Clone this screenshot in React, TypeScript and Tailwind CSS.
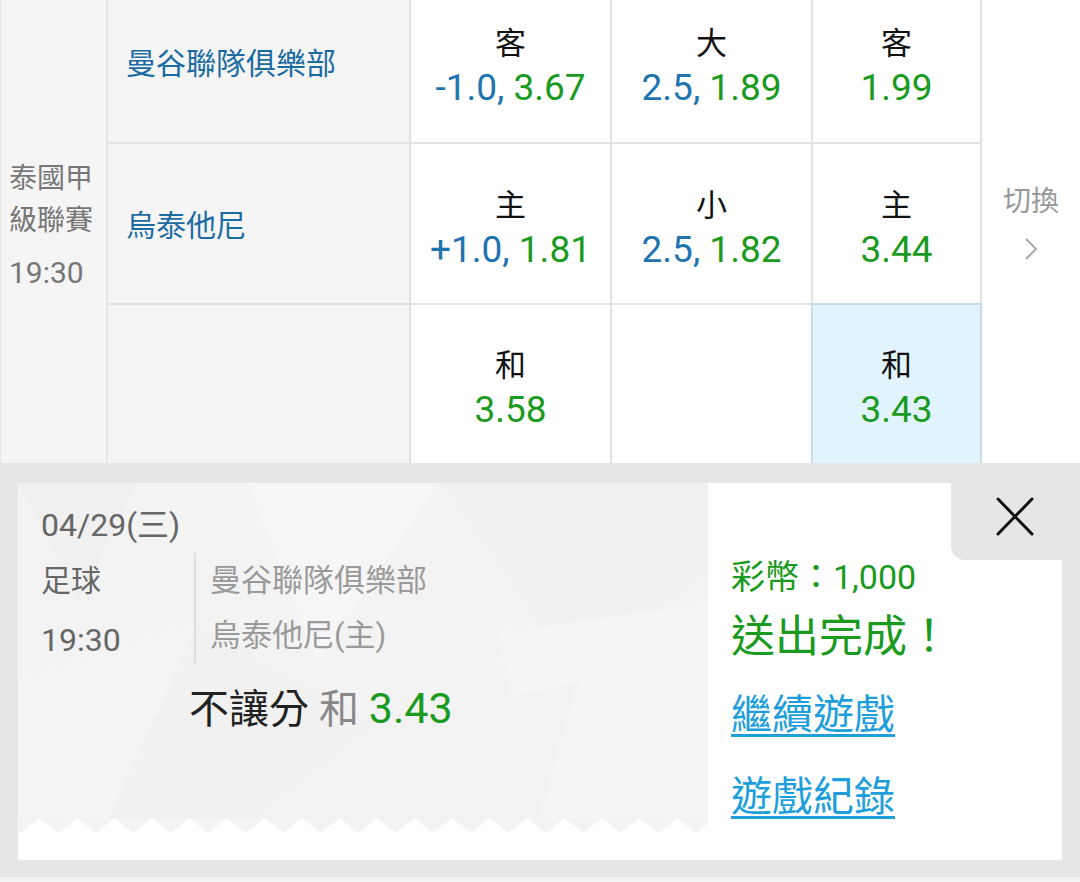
const blue = 'text-[#1f74b0]'
const green = 'text-[#1a9a1e]'

interface Odd {
  label: string
  pre?: string
  value?: string
}

function OddCell({ odd, last, hot }: { odd?: Odd; last?: boolean; hot?: boolean }) {
  return (
    <div
      className={`flex flex-col items-center justify-center pt-[8px] border-r-2 ${
        last ? '' : 'border-b-2'
      } ${hot ? 'bg-[#e1f3fc] border-[#c6dde8] border-t-2 border-l-2 -ml-[2px] -mt-[2px]' : 'bg-white border-[#e2e2e2]'}`}
    >
      {odd && (
        <>
          <div className="text-[31px] leading-[44px] text-[#111]">{odd.label}</div>
          <div className="text-[37px] leading-[44px]">
            {odd.pre && <span className={blue}>{odd.pre}, </span>}
            <span className={green}>{odd.value}</span>
          </div>
        </>
      )}
    </div>
  )
}

function TeamCell({ name, last }: { name?: string; last?: boolean }) {
  return (
    <div
      className={`flex items-center pl-[18px] pt-[4px] bg-[#f5f5f5] border-r-2 border-[#e2e2e2] ${
        last ? '' : 'border-b-2'
      }`}
    >
      {name && <span className="text-[30px] text-[#1b6ba3]">{name}</span>}
    </div>
  )
}

// faint low-poly background of the ticket
function Pattern() {
  return (
    <svg className="absolute inset-0 w-full h-full" viewBox="0 0 690 335" preserveAspectRatio="none">
      <polygon points="0,0 120,0 60,120" fill="#f0f0f0" />
      <polygon points="230,0 420,0 300,180" fill="#f6f6f6" />
      <polygon points="420,0 690,0 690,90 560,200" fill="#f1f1f1" />
      <polygon points="0,200 180,140 90,335 0,335" fill="#f5f5f5" />
      <polygon points="180,140 360,240 240,335 90,335" fill="#f1f1f1" />
      <polygon points="480,150 690,120 690,335 520,335" fill="#f5f5f5" />
      <polygon points="360,240 560,200 520,335 240,335" fill="#f2f2f2" />
    </svg>
  )
}

function Zigzag() {
  const teeth = Array.from({ length: 19 }, (_, i) => i)
  return (
    <svg className="block w-[690px] h-[15px]" viewBox="0 0 690 15" preserveAspectRatio="none">
      {teeth.map(i => {
        const x = -16 + i * 37.5
        return <polygon key={i} points={`${x},0 ${x + 37.5},0 ${x + 18.75},15`} fill="#f3f3f3" />
      })}
    </svg>
  )
}

export default function App() {
  return (
    <main className="w-[1080px] h-[882px] overflow-hidden bg-white font-[Roboto,'Noto_Sans_CJK_TC',sans-serif]">
      {/* 賽事表格 */}
      <section className="h-[463px] overflow-hidden">
        <div className="-mt-[19px] grid grid-cols-[108px_303px_201px_201px_169px_98px] grid-rows-[163px_161px_158px]">
          <div className="row-span-3 bg-[#f5f5f5] border-r-2 border-l border-[#e6e6e6] flex flex-col justify-center pl-[8px] pt-[8px] text-[28px] text-[#777]">
            <div className="leading-[42px]">泰國甲級聯賽</div>
            <div className="leading-[42px] mt-[10px] text-[30px]">19:30</div>
          </div>

          <TeamCell name="曼谷聯隊俱樂部" />
          <OddCell odd={{ label: '客', pre: '-1.0', value: '3.67' }} />
          <OddCell odd={{ label: '大', pre: '2.5', value: '1.89' }} />
          <OddCell odd={{ label: '客', value: '1.99' }} />
          <div className="row-span-3 col-start-6 row-start-1 bg-white flex flex-col items-center justify-center text-[28px] text-[#999]">
            <div className="leading-[36px]">切換</div>
            <svg className="mt-[17px] w-[14px] h-[24px]" viewBox="0 0 14 24" fill="none">
              <path d="M2 2 L12 12 L2 22" stroke="#aaa" strokeWidth="2" />
            </svg>
          </div>

          <TeamCell name="烏泰他尼" />
          <OddCell odd={{ label: '主', pre: '+1.0', value: '1.81' }} />
          <OddCell odd={{ label: '小', pre: '2.5', value: '1.82' }} />
          <OddCell odd={{ label: '主', value: '3.44' }} />

          <TeamCell last />
          <OddCell odd={{ label: '和', value: '3.58' }} last />
          <OddCell last />
          <OddCell odd={{ label: '和', value: '3.43' }} last hot />
        </div>
      </section>

      {/* 注單結果 */}
      <section className="bg-[#e6e6e6] pt-[20px] px-[18px] pb-[17px]">
        <div className="relative flex h-[377px] bg-white">
          <div className="w-[690px] flex flex-col">
            <div className="relative h-[335px] bg-[#f3f3f3] rounded-tr-[6px]">
              <Pattern />
              <div className="relative">
                <div className="pl-[23px] pt-[22px] text-[32px] leading-[40px] text-[#666]">04/29(三)</div>
                <div className="flex pl-[23px] mt-[8px]">
                  <div className="w-[153px] text-[30px] text-[#666]">
                    <div className="leading-[55px]">足球</div>
                    <div className="leading-[55px] pt-[5px] text-[32px]">19:30</div>
                  </div>
                  <div className="border-l-2 border-[#dedede] pl-[14px] text-[31px] leading-[55px] text-[#9a9a9a] h-[110px]">
                    <div>曼谷聯隊俱樂部</div>
                    <div>烏泰他尼(主)</div>
                  </div>
                </div>
                <div className="pl-[171px] mt-[15px] text-[40px] leading-[50px]">
                  <span className="text-[#222]">不讓分</span>
                  <span className="text-[#888]"> 和 </span>
                  <span className={`text-[43px] ${green}`}>3.43</span>
                </div>
              </div>
            </div>
            <Zigzag />
          </div>

          <div className="flex-1 pl-[23px] pt-[73px]">
            <div className={`text-[34px] leading-[42px] ${green}`}>彩幣：1,000</div>
            <div className={`mt-[11px] text-[44px] leading-[56px] ${green}`}>送出完成！</div>
            <a className="block mt-[22px] text-[41px] leading-[56px] text-[#1e9fdc] underline decoration-[3px] underline-offset-[5px]">
              繼續遊戲
            </a>
            <a className="block mt-[26px] text-[41px] leading-[56px] text-[#1e9fdc] underline decoration-[3px] underline-offset-[5px]">
              遊戲紀錄
            </a>
          </div>

          <button className="absolute top-0 right-0 w-[111px] h-[77px] bg-[#e6e6e6] rounded-bl-[14px] flex items-start pl-[45px] pt-[14px]">
            <svg className="w-[38px] h-[39px]" viewBox="0 0 38 39" fill="none">
              <path d="M2 2 L36 37 M36 2 L2 37" stroke="#111" strokeWidth="3" strokeLinecap="round" />
            </svg>
          </button>
        </div>
      </section>
      <div className="h-[5px] bg-[#f2f2f2]" />
    </main>
  )
}
